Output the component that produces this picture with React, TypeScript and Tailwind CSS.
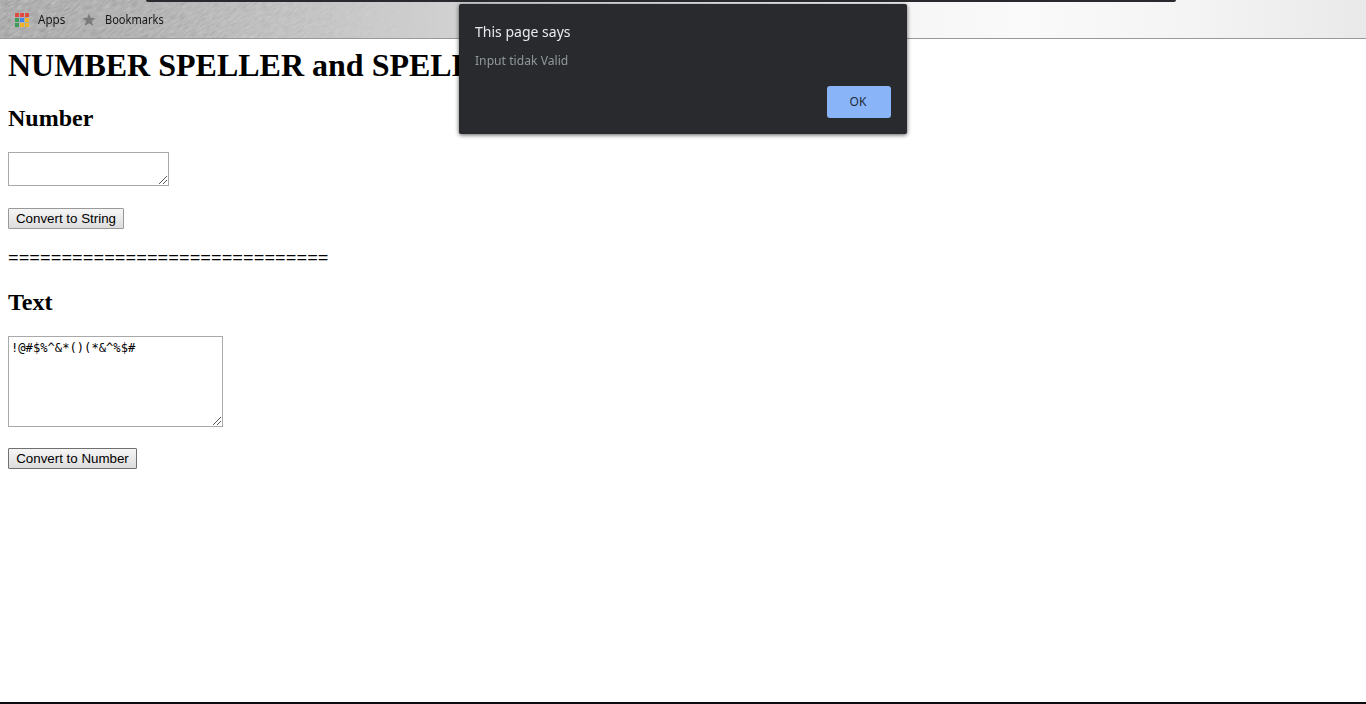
import React from "react";

const appColors = [
  "#e04a3f", "#e04a3f", "#e04a3f",
  "#3f9b5b", "#4285e4", "#eeb52b",
  "#3f9b5b", "#eeb52b", "#eeb52b",
];

function Texture() {
  return (
    <svg className="absolute inset-0 h-full w-full" aria-hidden="true">
      <defs>
        <filter id="grain" x="0" y="0" width="100%" height="100%">
          <feTurbulence type="fractalNoise" baseFrequency="0.12 0.6" numOctaves="3" seed="4" />
          <feColorMatrix values="1.1 0 0 0 0.05  1.1 0 0 0 0.05  1.1 0 0 0 0.05  0 0 0 0 0.34" />
        </filter>
        <linearGradient id="fade">
          <stop offset="0" stopColor="white" />
          <stop offset="0.55" stopColor="white" stopOpacity="0.6" />
          <stop offset="1" stopColor="white" stopOpacity="0" />
        </linearGradient>
        <mask id="fadeMask">
          <rect width="440" height="39" fill="url(#fade)" />
        </mask>
      </defs>
      <g mask="url(#fadeMask)">
        <g transform="rotate(-32)">
          <rect x="-60" y="-20" width="560" height="330" filter="url(#grain)" />
        </g>
      </g>
    </svg>
  );
}

function BookmarkBar() {
  return (
    <header className="relative h-[39px] shrink-0 overflow-hidden border-b border-[#999799] bg-[linear-gradient(90deg,#a0a0a0_0%,#ababab_10%,#bcbcbc_18%,#cacaca_27%,#d2d2d2_34%,#f6f6f6_66%,#fafafa_75%,#f4f4f4_87%,#e9e9e9_100%)]">
      <Texture />
      <div className="absolute left-[146px] top-0 h-[2px] w-[1030px] rounded-b-[4px] bg-[#292a2d]" />
      <nav className="relative flex h-[39px] items-center pl-[15px] font-['Noto_Sans','Open_Sans',sans-serif] text-[12px] text-[#161616]">
        <svg width="14" height="14" viewBox="0 0 14 14" shapeRendering="crispEdges">
          {appColors.map((color, i) => (
            <rect key={i} x={(i % 3) * 5} y={Math.floor(i / 3) * 5} width="4" height="4" fill={color} />
          ))}
        </svg>
        <span className="ml-[9px] w-[44px] whitespace-nowrap"><span className="inline-block origin-left scale-x-[0.97]">Apps</span></span>
        <svg width="14" height="14" viewBox="0 0 14 14" className="mt-px">
          <path d="M7 .5 8.8 5h4.7L9.8 8l1.4 5L7 10.2 2.8 13l1.4-5L.5 5h4.7Z" fill="#7b7b7b" />
        </svg>
        <span className="ml-[9px] inline-block origin-left scale-x-[0.92] whitespace-nowrap">Bookmarks</span>
      </nav>
    </header>
  );
}

function TextBox({ size, value = "", label }: { size: string; value?: string; label: string }) {
  return (
    <div className={`relative ${size}`}>
      <textarea
        aria-label={label}
        defaultValue={value}
        spellCheck={false}
        className="block h-full w-full resize-none overflow-hidden border border-[#a9a9a9] bg-white px-[2px] pt-[4px] font-['DejaVu_Sans_Mono','Liberation_Mono',monospace] text-[12.15px] leading-[15px] text-black outline-none"
      />
      <svg className="absolute bottom-[2px] right-[1px]" width="9" height="9" viewBox="0 0 9 9" shapeRendering="crispEdges">
        {Array.from({ length: 8 }, (_, i) => (
          <rect key={i} x={i} y={8 - i} width="1" height="1" fill="#5a5a5a" />
        ))}
        {Array.from({ length: 4 }, (_, i) => (
          <rect key={`s${i}`} x={i + 4} y={8 - i} width="1" height="1" fill="#5a5a5a" />
        ))}
      </svg>
    </div>
  );
}

const buttonStyle =
  "flex h-[21px] items-center justify-center whitespace-nowrap rounded-[1px] border bg-linear-to-b from-[#f6f6f6] to-[#dddddd] font-['Liberation_Sans',Arial,sans-serif] text-[13.333px] leading-[15px] text-black";

export default function App() {
  return (
    <div className="relative flex h-[704px] w-full flex-col overflow-hidden border-b-2 border-[#0d0b10] bg-white">
      <BookmarkBar />
      <main className="flex flex-col items-start px-2 font-['Liberation_Serif','Times_New_Roman',serif] text-black">
        <h1 className="mt-[8px] w-[452px] overflow-hidden whitespace-nowrap text-[32px] font-bold leading-[37px]">NUMBER SPELLER and SPELL</h1>
        <h2 className="mt-[21px] text-[24px] font-bold leading-[27px]">Number</h2>
        <div className="mt-[20px]">
          <TextBox size="h-[34px] w-[161px]" label="Number" />
        </div>
        <button className={`${buttonStyle} mt-[22px] w-[116px] border-[#999999] pb-px`}>Convert to String</button>
        <p className="mt-[18px] text-[18.76px] font-bold leading-[21px]">==============================</p>
        <h2 className="mt-[21px] text-[24px] font-bold leading-[27px]">Text</h2>
        <div className="mt-[20px]">
          <TextBox size="h-[91px] w-[215px]" value="!@#$%^&*()(*&^%$#" label="Text" />
        </div>
        <button className={`${buttonStyle} mt-[21px] w-[129px] border-[#707070] pb-px`}>Convert to Number</button>
      </main>
      <section
        role="alertdialog"
        className="absolute left-[459px] top-[4px] flex h-[130px] w-[448px] flex-col rounded-[2px] bg-[#292a2d] px-4 pt-[16px] font-['Noto_Sans','Open_Sans',sans-serif] shadow-[0_1px_4px_rgba(0,0,0,0.65)]"
      >
        <h3 className="origin-left scale-x-[0.935] self-start whitespace-nowrap text-[15px] leading-[22px] text-[#e8eaed]">This page says</h3>
        <p className="mt-[9px] origin-left scale-x-[0.935] self-start whitespace-nowrap text-[13px] leading-[19px] text-[#8f999b]">Input tidak Valid</p>
        <button className="mt-[16px] flex h-8 w-16 items-center justify-center self-end rounded-[3px] bg-[#8ab4f8] pr-[2px] text-[12px] text-[#202a3a]">
          <span>OK</span>
        </button>
      </section>
    </div>
  );
}
